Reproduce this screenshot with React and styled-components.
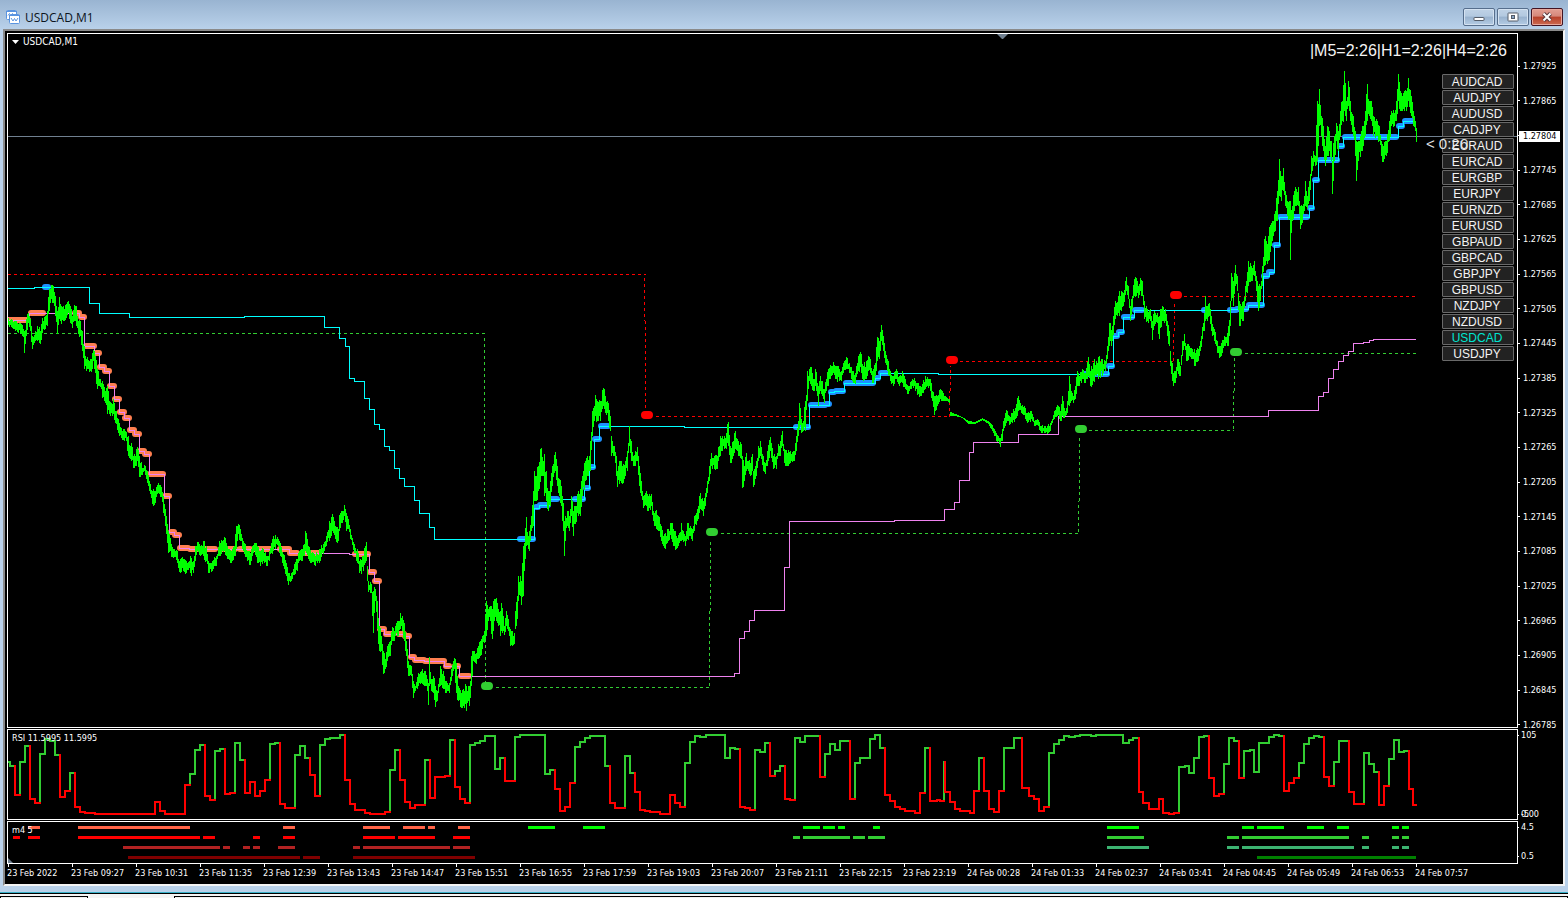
import { createGlobalStyle, styled } from 'styled-components'


function App() {
  return (
    <Page>
      <GlobalStyle/>
      <TitleBar>
        <ChartIcon/>
        <WindowTitle>USDCAD,M1</WindowTitle>
        <WindowButtons/>
      </TitleBar>
      <Frame>
        <PricePane/>
        <PriceAxis/>
        <RsiPane/>
        <RsiAxis/>
        <TrendPane/>
        <TrendAxis/>
        <TimeAxis/>
      </Frame>
      <TabStrip>
        <Tab $size="88px"/>
        <ActiveTab/>
        <Tab $size="auto"/>
      </TabStrip>
    </Page>
  );
}

export default App;

const GlobalStyle = createGlobalStyle`
  * {
    box-sizing: border-box;
  }

  body {
    margin: 0;
    background: #b9d1ea;
    font-family: "DejaVu Sans Condensed", "DejaVu Sans", sans-serif;
  }
`;

const Page = styled.div`
  display: flex;
  flex-direction: column;
  height: 100vh;
  min-height: 560px;
`;

const TitleBar = styled.header`
  display: flex;
  align-items: center;
  flex: 0 0 29px;
  padding: 5px 5px 0 5px;
  background: linear-gradient(#99b4d1, #b9d1ea);
`;

const WindowTitle = styled.h1`
  flex: 1;
  margin: 0 0 0 4px;
  padding-top: 1px;
  font: 12px/16px "Open Sans", "Noto Sans", sans-serif;
  color: #0c1420;
`;

const ButtonRow = styled.div`
  display: flex;
  gap: 2px;
`;

const WindowButton = styled.button`
  display: flex;
  align-items: center;
  justify-content: center;
  width: 32px;
  height: 18px;
  padding: 0;
  border: 1px solid ${props => (props.$close ? '#431422' : '#566e8c')};
  border-radius: 2px;
  box-shadow: inset 0 0 0 1px ${props => (props.$close ? '#e8a89c' : '#d4e2f1')};
  background: ${props =>
    props.$close
      ? 'linear-gradient(#e3a094 0, #d6877a 45%, #b8402a 50%, #cc6a50 100%)'
      : 'linear-gradient(#bfd2e6 0, #b3c9e0 45%, #98b2ce 50%, #b4cce4 100%)'};
`;

const Frame = styled.main`
  display: grid;
  grid-template-columns: 1fr 45px;
  grid-template-rows: minmax(0, 1fr) 91px 43px 19px;
  row-gap: 1px;
  flex: 1;
  min-height: 0;
  margin: 0 3px 6px 3px;
  padding: 2px 0 0 2px;
  border: 2px solid;
  border-color: #8a8a8a #f4f4f4 #f4f4f4 #8a8a8a;
  background: #000;
`;

const Pane = styled.section`
  position: relative;
  min-height: 0;
  border: 1px solid #fff;
`;

const Plot = styled.svg`
  display: block;
  width: 100%;
  height: 100%;
`;

const PaneLabel = styled.h2`
  position: absolute;
  top: 2px;
  left: 4px;
  display: flex;
  align-items: center;
  gap: 4px;
  margin: 0;
  font-size: ${props => (props.$main ? 10 : 9)}px;
  font-weight: normal;
  line-height: 12px;
  color: #fff;
`;

const Countdown = styled.p`
  position: absolute;
  top: 7px;
  right: 10px;
  margin: 0;
  font: 16px/20px "Liberation Sans", sans-serif;
  color: #f4f4f4;
`;

const BarTimer = styled.p`
  position: absolute;
  top: 101px;
  right: 49px;
  margin: 0;
  font: 15px/18px "Liberation Sans", sans-serif;
  color: #e4e4e4;
`;

const SymbolList = styled.nav`
  position: absolute;
  top: 40px;
  right: 3px;
  display: flex;
  flex-direction: column;
  gap: 1px;
  width: 72px;
`;

const SymbolButton = styled.button`
  height: 15px;
  padding: 1px 2px 0 0;
  border: 1px solid #696969;
  border-radius: 1px;
  background: #222;
  font: 12px/12px "Liberation Sans", sans-serif;
  color: ${props => (props.$active ? '#00e5d0' : '#f4f4f4')};
`;

const Axis = styled.div`
  display: flex;
  flex-direction: column;
  justify-content: space-between;
  font-size: 9px;
  line-height: 12px;
  color: #fff;
`;

const PriceScale = styled(Axis)`
  margin: 27px 0 -3px 0;
`;

const SmallScale = styled(Axis)`
  padding-bottom: ${props => (props.$bottom || 0)}px;
`;

const AxisLabel = styled.span`
  display: flex;
  align-items: center;
  height: 12px;

  &::before {
    content: '';
    width: ${props => (props.$current || props.$tight ? 1 : 2)}px;
    height: 1px;
    margin-right: ${props => (props.$current ? 0 : props.$tight ? 2 : 3)}px;
    background: #fff;
  }
`;

const CurrentPrice = styled.strong`
  width: 41px;
  margin-top: 2px;
  padding-left: 4px;
  background: #fff;
  font-weight: normal;
  line-height: 11px;
  color: #000;
`;

const Overlap = styled.span`
  display: grid;

  > * {
    grid-area: 1 / 1;
  }
`;

const TimeRow = styled.ol`
  display: grid;
  grid-column: 1 / -1;
  grid-template-columns: repeat(22, 64fr) 148fr;
  margin: -1px 0 0 0;
  padding: 0;
  list-style: none;
  font-size: 9px;
  line-height: 12px;
  color: #fff;
  white-space: nowrap;
`;

const TimeLabel = styled.li`
  &::before {
    content: '';
    display: block;
    width: 1px;
    height: 3px;
    margin-left: 1px;
    background: #fff;
  }
`;

const TabStrip = styled.footer`
  display: flex;
  flex: 0 0 6px;
  border-top: 1px solid #38b0c8;
  background: linear-gradient(#000 1px, #f4f4f4 1px);
`;

const Tab = styled.div`
  flex: ${props => (props.$size === 'auto' ? '1' : `0 0 ${props.$size}`)};
  height: 2px;
  margin-top: 3px;
  border: 1px solid #000;
  border-bottom: 0;
  background: #f0f0f0;
`;

const ActiveTab = styled.div`
  flex: 0 0 86px;
`;

const symbols = [
  'AUDCAD', 'AUDJPY', 'AUDUSD', 'CADJPY', 'EURAUD', 'EURCAD', 'EURGBP', 'EURJPY', 'EURNZD',
  'EURUSD', 'GBPAUD', 'GBPCAD', 'GBPJPY', 'GBPUSD', 'NZDJPY', 'NZDUSD', 'USDCAD', 'USDJPY',
];

const prices = [
  '1.27925', '1.27865', '1.27804', '1.27745', '1.27685', '1.27625', '1.27565', '1.27505', '1.27445', '1.27385',
  '1.27325', '1.27265', '1.27205', '1.27145', '1.27085', '1.27025', '1.26965', '1.26905', '1.26845', '1.26785',
];

const times = [
  '23 Feb 2022', '23 Feb 09:27', '23 Feb 10:31', '23 Feb 11:35', '23 Feb 12:39', '23 Feb 13:43',
  '23 Feb 14:47', '23 Feb 15:51', '23 Feb 16:55', '23 Feb 17:59', '23 Feb 19:03', '23 Feb 20:07',
  '23 Feb 21:11', '23 Feb 22:15', '23 Feb 23:19', '24 Feb 00:28', '24 Feb 01:33', '24 Feb 02:37',
  '24 Feb 03:41', '24 Feb 04:45', '24 Feb 05:49', '24 Feb 06:53', '24 Feb 07:57',
];

// x, high, low of the one minute bars
const priceData = `8 317 324,12 319 327,17 322 331,21 323 333,23 328 336,24 330 352,26 318 335,28 312 322,30 318 330,
32 335 348,34 334 342,37 325 340,40 330 343,42 317 332,45 315 328,47 310 325,49 288 310,51 284 298,53 285 302,
55 295 315,57 310 333,59 296 318,61 305 323,64 308 320,66 303 317,68 300 312,70 305 322,72 315 327,74 304 320,
76 305 325,78 320 333,80 320 335,82 330 350,84 345 368,86 358 370,89 360 371,92 352 368,93 349 360,95 355 372,
97 368 388,100 378 386,102 380 397,105 390 402,107 385 413,109 400 413,113 398 413,116 410 423,119 422 435,
123 428 439,126 431 440,128 435 455,130 445 458,131 442 460,133 455 467,135 455 465,137 446 460,139 455 476,
142 467 474,144 464 470,147 470 482,149 480 490,152 490 503,155 490 502,158 482 492,161 486 496,163 495 512,
165 508 525,168 530 552,171 543 556,174 548 556,177 550 562,179 560 571,183 558 570,186 560 572,190 555 572,
193 560 572,195 545 560,197 541 550,200 545 555,203 540 555,206 545 560,208 560 572,212 560 570,216 555 565,
219 540 555,222 540 550,224 536 550,227 545 558,231 550 562,234 545 555,236 525 548,238 523 533,240 528 540,
243 540 550,247 550 560,250 552 564,252 545 555,254 542 550,257 545 562,260 550 565,263 548 560,266 555 565,
269 550 560,271 542 552,273 535 550,277 536 544,279 540 552,283 553 565,286 562 575,288 572 584,291 572 580,
294 563 574,297 558 570,299 550 560,302 548 560,304 543 555,305 530 550,308 545 558,311 552 562,314 553 564,
317 553 562,320 548 560,323 543 553,326 535 545,329 520 540,332 513 530,335 525 538,338 528 540,339 514 530,
342 510 522,344 504 515,346 512 530,348 518 528,350 528 538,354 543 552,357 548 562,359 560 572,363 555 570,
366 541 560,367 565 580,368 580 591,371 583 592,373 590 632,375 588 600,377 600 628,379 625 650,381 635 650,
383 650 673,385 658 668,387 645 660,390 640 655,392 626 640,394 630 640,396 622 632,398 620 635,400 612 628,
402 615 630,404 622 640,406 640 655,408 660 675,411 665 675,413 680 697,415 685 690,418 672 685,421 670 682,
425 670 685,427 678 690,428 682 704,429 656 685,431 678 690,433 675 692,435 685 706,437 690 700,440 665 685,
443 670 688,446 680 692,449 682 692,451 668 680,453 660 670,454 657 668,456 662 692,458 685 700,461 692 707,
464 690 707,466 685 710,468 685 700,469 685 705,470 680 697,471 655 685,473 650 660,476 652 663,478 645 658,
480 640 655,482 635 648,484 630 642,486 600 635,488 608 620,490 605 620,492 608 638,494 598 620,496 597 620,
498 608 625,500 610 635,501 602 630,504 625 634,506 610 625,508 618 630,510 628 645,512 630 645,514 632 643,
515 610 628,517 595 618,518 575 600,520 575 595,521 580 604,523 545 595,525 527 558,526 516 545,528 535 548,
529 530 550,531 515 530,533 490 525,534 470 500,536 475 500,538 465 490,541 447 475,543 460 475,544 453 495,
546 470 500,548 490 510,550 480 505,552 465 485,555 451 470,557 465 485,559 478 495,561 485 505,562 495 520,
564 520 555,565 515 540,567 510 525,569 515 530,571 495 515,573 510 535,575 505 523,578 490 515,580 488 515,
582 475 495,585 460 480,587 455 475,589 455 470,590 440 470,592 410 435,594 405 420,595 394 415,597 400 420,
600 400 420,603 387 405,605 395 412,608 402 420,610 415 430,611 435 455,614 445 455,616 455 475,617 470 486,
620 460 480,622 465 483,625 460 475,627 450 470,629 425 445,631 440 460,633 455 465,635 450 465,637 446 460,
639 465 485,641 480 495,643 495 507,646 490 505,648 495 510,651 493 505,653 510 520,655 510 525,658 515 530,
661 525 540,663 535 545,665 532 548,668 528 540,671 522 538,674 530 545,676 535 548,679 532 542,681 522 540,
685 535 545,687 522 538,690 525 535,692 528 540,694 515 530,697 508 520,700 492 508,703 500 515,705 492 505,
707 480 492,709 465 480,711 452 465,714 455 468,717 455 468,720 435 455,722 435 450,724 435 448,726 432 448,
728 421 445,730 445 462,733 440 455,735 430 448,738 440 455,741 443 458,742 455 487,744 465 480,746 452 470,
748 460 470,750 462 475,752 453 470,753 470 486,756 460 475,758 445 460,760 440 455,763 455 470,765 462 473,
767 450 465,770 436 450,773 455 468,776 455 468,778 443 455,780 440 455,782 430 445,784 448 462,787 452 465,
790 450 462,794 450 460,796 435 450,798 420 435,799 402 428,801 418 432,803 420 430,805 400 430,807 370 400,
809 368 380,811 366 385,814 378 390,815 368 385,818 385 405,820 375 390,822 380 395,824 388 402,826 378 390,
828 368 385,831 365 375,833 361 372,836 365 378,839 368 380,841 370 380,843 362 372,846 356 368,849 362 372,
852 370 380,855 372 383,858 355 370,861 353 372,863 365 380,866 360 378,868 355 370,870 358 372,872 370 382,
875 362 375,877 336 360,879 340 358,881 324 340,883 335 350,885 350 362,887 358 370,890 370 380,893 375 385,
896 368 378,899 375 385,902 370 382,905 378 388,908 385 393,911 380 388,914 377 385,917 382 394,921 386 395,
925 375 388,927 376 385,930 378 390,932 390 400,934 395 414,937 395 405,940 388 398,943 392 400,947 397 400,
949 398 402,950 411 415,955 413 415,962 416 417,968 420 423,975 421 423,982 417 419,988 420 423,992 424 430,
996 432 440,998 435 440,1000 437 446,1002 428 440,1003 420 430,1005 412 425,1007 410 420,1009 415 424,
1012 412 422,1015 407 418,1018 395 410,1021 405 412,1024 405 414,1027 412 422,1031 410 418,1034 420 425,
1037 418 424,1041 425 432,1044 425 432,1047 425 433,1050 422 430,1052 418 422,1054 410 418,1057 404 415,
1060 410 420,1062 395 415,1065 410 415,1067 400 412,1069 375 405,1071 390 400,1073 395 402,1075 385 398,
1077 370 385,1079 375 385,1082 368 378,1085 372 382,1088 356 375,1090 370 385,1093 362 380,1096 360 375,
1099 355 375,1102 358 375,1105 360 370,1107 345 358,1109 322 345,1112 325 340,1115 300 318,1118 295 312,
1121 290 310,1123 292 305,1126 276 290,1128 285 298,1130 305 320,1132 295 308,1134 278 295,1136 277 295,
1138 285 297,1140 277 290,1142 280 295,1144 300 318,1147 308 320,1150 308 320,1152 320 339,1154 310 325,
1157 312 322,1159 315 338,1162 305 320,1165 308 320,1167 320 335,1169 330 345,1170 350 365,1172 362 380,
1173 372 385,1175 370 382,1177 358 370,1180 365 375,1182 340 355,1184 333 345,1186 345 360,1189 345 355,
1192 348 358,1195 352 365,1198 348 360,1200 340 350,1202 326 338,1204 312 330,1205 295 320,1207 305 320,
1209 302 315,1211 315 330,1214 328 340,1217 340 352,1219 345 357,1221 342 355,1224 335 345,1227 332 345,
1228 325 345,1230 300 325,1231 272 300,1233 280 305,1235 264 285,1237 275 290,1239 300 325,1241 305 318,
1243 300 320,1245 285 300,1248 260 285,1251 265 280,1254 260 275,1256 275 290,1258 285 310,1260 285 300,
1262 265 285,1264 238 265,1266 240 260,1268 235 260,1271 222 245,1273 220 235,1275 210 230,1277 190 220,
1279 158 195,1281 175 200,1283 167 190,1285 190 205,1287 200 215,1289 200 218,1290 200 259,1292 205 220,
1294 190 210,1296 188 205,1298 186 205,1300 205 228,1302 205 222,1304 195 210,1305 180 205,1307 195 208,
1309 180 200,1311 155 175,1313 150 165,1315 155 165,1317 100 160,1319 88 125,1321 115 135,1323 125 150,
1325 145 165,1327 125 155,1329 130 150,1331 140 160,1332 160 193,1334 135 160,1336 122 140,1338 130 150,
1340 110 135,1342 100 120,1344 70 110,1346 100 120,1348 80 105,1350 100 120,1353 115 135,1355 130 155,
1356 140 180,1358 140 160,1361 130 150,1363 125 145,1365 110 135,1367 83 120,1369 100 115,1371 100 120,
1373 115 135,1376 118 135,1379 125 140,1381 140 155,1383 145 161,1386 140 155,1389 120 140,1391 110 125,
1394 112 125,1396 100 120,1398 73 100,1400 90 110,1402 95 110,1404 90 110,1406 90 110,1408 77 100,1411 95 115,
1413 110 125,1415 120 130,1416 127 141`;

// x y pairs: at x the line jumps to y
const upperBand = `8 288,35 287,90 303,100 313,130 317,245 316,325 327,340 338,346 346,350 378,355 381,365 398,
370 409,375 424,380 429,385 446,390 450,395 468,400 478,405 486,415 500,420 513,430 527,435 539,535 508,540 505,
550 499,585 488,590 467,595 439,600 426,685 427,810 405,830 392,835 391,845 383,876 378,881 373,939 374,1109 366,
1114 336,1119 332,1124 317,1135 310,1231 309,1249 305,1264 276,1270 272,1275 245,1280 217,1310 208,1314 180,
1319 160,1339 146,1344 137,1399 126,1404 121,1414 121`;

const lowerBand = `8 320,30 313,80 317,85 346,95 353,100 367,105 371,110 386,115 399,120 412,125 418,130 430,135 434,
140 451,145 454,150 474,165 496,170 532,175 535,180 548,190 549,290 553,350 554,370 572,375 581,380 629,385 634,
405 636,410 657,415 660,425 661,445 666,460 676,735 673,740 638,745 631,750 620,755 610,785 567,790 521,895 520,
945 509,955 502,960 480,970 452,974 442,1019 434,1059 416,1269 410,1319 396,1324 392,1329 378,1334 369,1339 361,
1344 355,1349 351,1354 343,1364 342,1370 340,1374 339,1416 339`;

// x1 x2 y
const blueMarks = `45 48 287,520 533 539,536 538 507,540 548 505,551 557 499,575 583 499,586 588 488,590 593 467,
595 599 439,601 608 426,796 808 427,811 825 405,826 829 404,831 834 392,836 843 391,846 873 383,876 878 378,
881 888 373,1084 1107 374,1109 1112 366,1114 1117 336,1119 1122 332,1124 1132 317,1135 1142 310,1204 1207 310,
1230 1236 310,1237 1246 309,1249 1262 305,1264 1267 276,1269 1272 272,1275 1278 245,1280 1307 217,1310 1312 208,
1315 1317 180,1320 1337 160,1340 1342 146,1345 1396 137,1399 1402 126,1405 1412 121`;

const orangeMarks = `8 28 320,31 43 313,60 65 313,75 79 313,81 84 317,86 94 346,96 99 353,100 104 367,105 109 371,
110 114 386,115 119 399,120 124 412,125 129 418,130 134 430,135 139 434,140 144 451,145 149 454,150 163 474,
165 169 496,171 174 532,175 179 535,180 188 548,190 197 549,205 215 549,221 235 549,240 250 549,254 270 549,
280 289 549,290 297 553,305 319 553,355 368 554,370 374 572,375 379 581,380 384 629,386 392 634,399 404 634,
405 409 636,411 414 657,415 424 660,425 444 661,446 449 666,455 458 666,461 469 676`;

const rsi = `8 762 g,10 766 g,15 795 r,20 762 g,25 746 g,30 799 r,35 803 r,40 754 g,45 739 g,50 741 g,55 755 g,
60 797 r,65 791 r,70 773 g,75 807 r,80 812 r,85 813 r,95 814 r,155 802 r,160 811 r,165 814 r,185 785 r,190 774 g,
195 750 g,200 745 g,205 796 r,210 800 r,215 751 g,220 749 g,225 794 r,230 793 r,235 743 g,240 760 g,245 793 r,
250 782 r,255 796 r,260 791 r,265 780 r,270 744 g,275 743 g,280 804 r,285 808 r,295 755 g,300 746 g,305 758 g,
310 775 r,315 796 r,320 745 g,325 739 g,330 738 g,340 735 g,345 780 r,350 804 r,355 810 r,365 813 r,370 814 r,
385 812 r,390 770 g,395 750 g,400 780 r,405 802 r,410 808 r,415 805 r,425 760 g,430 798 r,435 777 r,445 776 r,
450 740 g,455 787 r,460 799 r,465 803 r,470 745 g,475 743 g,480 741 g,485 736 g,495 769 g,500 758 g,505 781 r,
515 737 g,520 735 g,545 774 g,550 770 g,555 789 r,560 811 r,565 807 r,570 783 r,575 747 g,580 742 g,585 738 g,
590 736 g,605 766 g,610 803 r,615 808 r,625 756 g,630 773 g,635 792 r,640 810 r,645 811 r,650 812 r,660 814 r,
670 795 r,675 803 r,680 807 r,685 763 g,690 742 g,695 736 g,700 737 g,706 735 g,725 758 g,730 748 g,735 749 g,
740 807 r,745 808 r,750 810 r,755 750 g,760 752 g,765 743 g,770 776 r,775 771 g,780 766 g,785 799 r,790 800 r,
795 738 g,800 742 g,805 736 g,820 777 r,825 754 g,830 744 g,835 750 g,840 741 g,850 799 r,855 763 g,860 758 g,
870 739 g,875 735 g,880 748 g,885 795 r,890 801 r,895 807 r,900 809 r,905 811 r,915 813 r,920 793 r,925 748 g,
930 801 r,937 800 r,940 801 r,944 762 g,945 792 r,950 802 r,955 809 r,960 811 r,970 813 r,974 791 r,979 758 g,
984 791 r,989 809 r,994 812 r,999 791 r,1004 748 g,1014 738 g,1022 788 r,1029 796 r,1034 799 r,1039 811 r,
1044 807 r,1049 753 g,1054 744 g,1059 740 g,1064 736 g,1069 737 g,1075 736 g,1080 735 g,1091 736 g,1096 735 g,
1123 743 g,1129 740 g,1133 738 g,1139 792 r,1143 803 r,1149 809 r,1159 799 r,1163 813 r,1169 814 r,1174 813 r,
1179 767 g,1185 766 g,1189 773 g,1194 758 g,1199 737 g,1204 736 g,1209 778 r,1214 796 r,1219 794 r,1224 764 g,
1229 738 g,1234 741 g,1239 778 r,1244 751 g,1250 750 g,1254 772 g,1259 743 g,1269 737 g,1274 735 g,1279 736 g,
1284 791 r,1289 783 r,1294 778 r,1299 763 g,1304 744 g,1309 738 g,1314 736 g,1319 737 g,1324 777 r,1329 786 r,
1334 762 g,1339 741 g,1349 792 r,1354 804 r,1364 753 g,1369 764 g,1374 772 g,1379 805 r,1384 786 r,1389 759 g,
1394 740 g,1399 752 g,1404 751 g,1409 789 r,1413 805 r,1416 805 r`;

const trendRows = [
  { y: 827, down: '#ff6347', up: '#00ff00',
    downs: '28 40,78 190,283 295,363 390,403 425,428 435,458 470',
    ups: '528 555,583 605,803 820,823 835,838 845,873 880,1107 1139,1242 1254,1257 1284,1307 1324,1337 1349,1392 1399,1402 1409' },
  { y: 837, down: '#ff0000', up: '#32cd32',
    downs: '13 20,28 40,78 200,203 215,253 260,283 295,363 395,398 435,453 470',
    ups: '793 800,803 850,853 865,868 885,1107 1144,1227 1239,1242 1349,1362 1369,1392 1399,1402 1409' },
  { y: 847, down: '#b22222', up: '#3cb371',
    downs: '123 220,223 230,243 250,253 260,278 295,353 360,363 450,453 470',
    ups: '1107 1149,1227 1239,1242 1354,1362 1369,1392 1399,1402 1409' },
  { y: 857, down: '#800000', up: '#008000',
    downs: '128 300,303 320,353 475',
    ups: '1257 1416' },
];

function parse(text) {
  return text.split(',').map(item => item.trim().split(' ').map(v => (isNaN(v) ? v : Number(v))));
}

function stepPath(text) {
  return parse(text).map(([x, y], i) => (i === 0 ? `M${x} ${y}` : `H${x}V${y}`)).join('');
}

function segmentPath(text) {
  return parse(text).map(([x1, x2, y]) => `M${x1} ${y}H${x2}`).join('');
}

function barPath() {
  const points = parse(priceData);
  let seed = 7;
  const random = () => {
    seed = (seed * 16807) % 2147483647;
    return seed / 2147483647;
  };
  let path = '';
  points.forEach(([x, high, low], i) => {
    path += `M${x} ${high}V${low}`;
    const next = points[i + 1];
    if (!next) return;
    for (let px = x + 1; px < next[0]; px++) {
      const t = (px - x) / (next[0] - x);
      const top = high + (next[1] - high) * t;
      const bottom = low + (next[2] - low) * t;
      // quiet bars stay thin, busy ones get wicks both ways
      const swing = bottom - top < 6 ? 0 : (bottom - top) * 0.7;
      const up = (random() - 0.6) * swing;
      const down = (random() - 0.6) * swing;
      path += `M${px} ${Math.round(top - up * 0.7)}V${Math.max(Math.round(bottom + down * 0.7), Math.round(top - up * 0.7) + 1)}`;
    }
  });
  return path;
}

function rsiPath(colour) {
  const points = parse(rsi);
  let path = '';
  points.forEach(([x, y, c], i) => {
    if (c !== colour) return;
    const from = i ? points[i - 1][1] : y;
    const end = points[i + 1] ? points[i + 1][0] : x;
    path += `M${x} ${from}V${y}H${end}`;
  });
  return path;
}

function PricePane() {
  return <Pane>
    <Plot viewBox="8 34 1509 693" preserveAspectRatio="none" role="img" aria-label="USDCAD one minute bars">
      <path d="M997 34h11l-5 5h-1z" fill="#708090"/>
      <g transform="translate(0.5 0.5)" fill="none" shapeRendering="crispEdges">
        <path d="M7 136H1517" stroke="#708090"/>
        <g strokeDasharray="3 3">
          <path d="M7 274H645M644 277V320M645 320V412M655 416H949M949 416V390M950 390V365M959 361H1173M1173 360V330M1174 330V300M1183 296H1415" stroke="#ff0000"/>
          <path d="M7 333H485M484 337V500M485 500V683M495 687H709M709 685V610M710 610V538M720 533H1078M1078 531V500M1079 500V434M1088 430H1233M1233 428V390M1234 390V357M1244 353H1415" stroke="#32cd32"/>
        </g>
      </g>
      <g fill="none" strokeWidth="6" strokeLinecap="round">
        <path d={segmentPath(orangeMarks)} stroke="#ff7f50"/>
        <path d={segmentPath(blueMarks)} stroke="#1e90ff"/>
      </g>
      <g transform="translate(-0.5 0.5)" fill="none" shapeRendering="crispEdges">
        <path d={stepPath(upperBand)} stroke="#00ffff"/>
        <path d={stepPath(lowerBand)} stroke="#ee82ee"/>
      </g>
      <g transform="translate(0.5 0.5)" fill="none" shapeRendering="crispEdges">
        <path d={barPath()} stroke="#00ff00"/>
      </g>
      <g fill="none" strokeWidth="8" strokeLinecap="round">
        <path d="M645 415h4M950 360h4M1174 295h4" stroke="#ff0000"/>
        <path d="M485 686h4M710 532h4M1079 429h4M1234 352h4" stroke="#32cd32"/>
      </g>
    </Plot>
    <PaneLabel $main>
      <svg width="7" height="4" viewBox="0 0 7 4"><path d="M0 0h7L3.5 4z" fill="#fff"/></svg>
      USDCAD,M1
    </PaneLabel>
    <Countdown>|M5=2:26|H1=2:26|H4=2:26</Countdown>
    <SymbolList>
      {symbols.map(symbol => (
        <SymbolButton key={symbol} type="button" $active={symbol === 'USDCAD'}>{symbol}</SymbolButton>
      ))}
    </SymbolList>
    <BarTimer>&lt; 0:26</BarTimer>
  </Pane>
}

function RsiPane() {
  return <Pane>
    <Plot viewBox="8 730 1509 89" preserveAspectRatio="none" role="img" aria-label="RSI">
      <g fill="none" strokeWidth="2" strokeLinecap="square" shapeRendering="crispEdges">
        <path d={rsiPath('g')} stroke="#32cd32"/>
        <path d={rsiPath('r')} stroke="#ff0000"/>
      </g>
    </Plot>
    <PaneLabel>RSI 11.5995 11.5995</PaneLabel>
  </Pane>
}

function TrendPane() {
  const bars = text => parse(text).map(([x1, x2]) => `M${x1} 0H${x2}`).join('');

  return <Pane>
    <Plot viewBox="8 822 1509 41" preserveAspectRatio="none" role="img" aria-label="Trend rows">
      {trendRows.map(row => (
        <g key={row.y} transform={`translate(0 ${row.y + 0.5})`} strokeWidth="3" shapeRendering="crispEdges">
          <path d={bars(row.downs)} stroke={row.down}/>
          <path d={bars(row.ups)} stroke={row.up}/>
        </g>
      ))}
      <path d="M8 858l5 5h-5z" fill="#708090"/>
    </Plot>
    <PaneLabel>m4 5</PaneLabel>
  </Pane>
}

function PriceAxis() {
  return <PriceScale>
    {prices.map((price, index) => (
      <AxisLabel key={price} $current={index === 2}>
        {index === 2 ? <CurrentPrice>{price}</CurrentPrice> : price}
      </AxisLabel>
    ))}
  </PriceScale>
}

function RsiAxis() {
  return <SmallScale>
    <AxisLabel $tight>105</AxisLabel>
    <Overlap>
      <AxisLabel $tight>0.00</AxisLabel>
      <AxisLabel $tight>-5</AxisLabel>
    </Overlap>
  </SmallScale>
}

function TrendAxis() {
  return <SmallScale $bottom={2}>
    <AxisLabel $tight>4.5</AxisLabel>
    <AxisLabel $tight>0.5</AxisLabel>
  </SmallScale>
}

function TimeAxis() {
  return <TimeRow>
    {times.map(time => <TimeLabel key={time}>{time}</TimeLabel>)}
  </TimeRow>
}

function ChartIcon() {
  return <svg width="16" height="16" viewBox="0 0 16 16" fill="#fff" stroke="#5a94e0">
    <rect x="1.5" y="1.5" width="10" height="9" rx="1"/>
    <path d="M1 2.5h11"/>
    <path d="M3 6.5l1.500-2 1.500 2 1.500-2 1.500 1.500" fill="none"/>
    <rect x="4.500" y="5.500" width="10" height="9" rx="1"/>
    <path d="M4 6.500h11"/>
    <path d="M6 9l2 3 1.500-2.500 1.500 2.500 2-3" fill="none"/>
  </svg>
}

function WindowButtons() {
  return <ButtonRow>
    <WindowButton type="button" aria-label="Minimize">
      <svg width="12" height="10" viewBox="0 0 12 10">
        <rect x="1" y="5.500" width="10" height="3" rx="0.500" fill="#fff" stroke="#545c68"/>
      </svg>
    </WindowButton>
    <WindowButton type="button" aria-label="Restore">
      <svg width="12" height="10" viewBox="0 0 12 10" stroke="#545c68">
        <rect x="1" y="1" width="10" height="8" rx="0.500" fill="#fff"/>
        <rect x="4.500" y="3.500" width="3" height="3" fill="#8aa6c6"/>
      </svg>
    </WindowButton>
    <WindowButton type="button" aria-label="Close" $close>
      <svg width="12" height="10" viewBox="0 0 12 10" fill="none">
        <path d="M2.500 1.500l7 7M9.500 1.500l-7 7" stroke="#5a3a40" strokeWidth="4"/>
        <path d="M2.500 1.500l7 7M9.500 1.500l-7 7" stroke="#fff" strokeWidth="2"/>
      </svg>
    </WindowButton>
  </ButtonRow>
}
